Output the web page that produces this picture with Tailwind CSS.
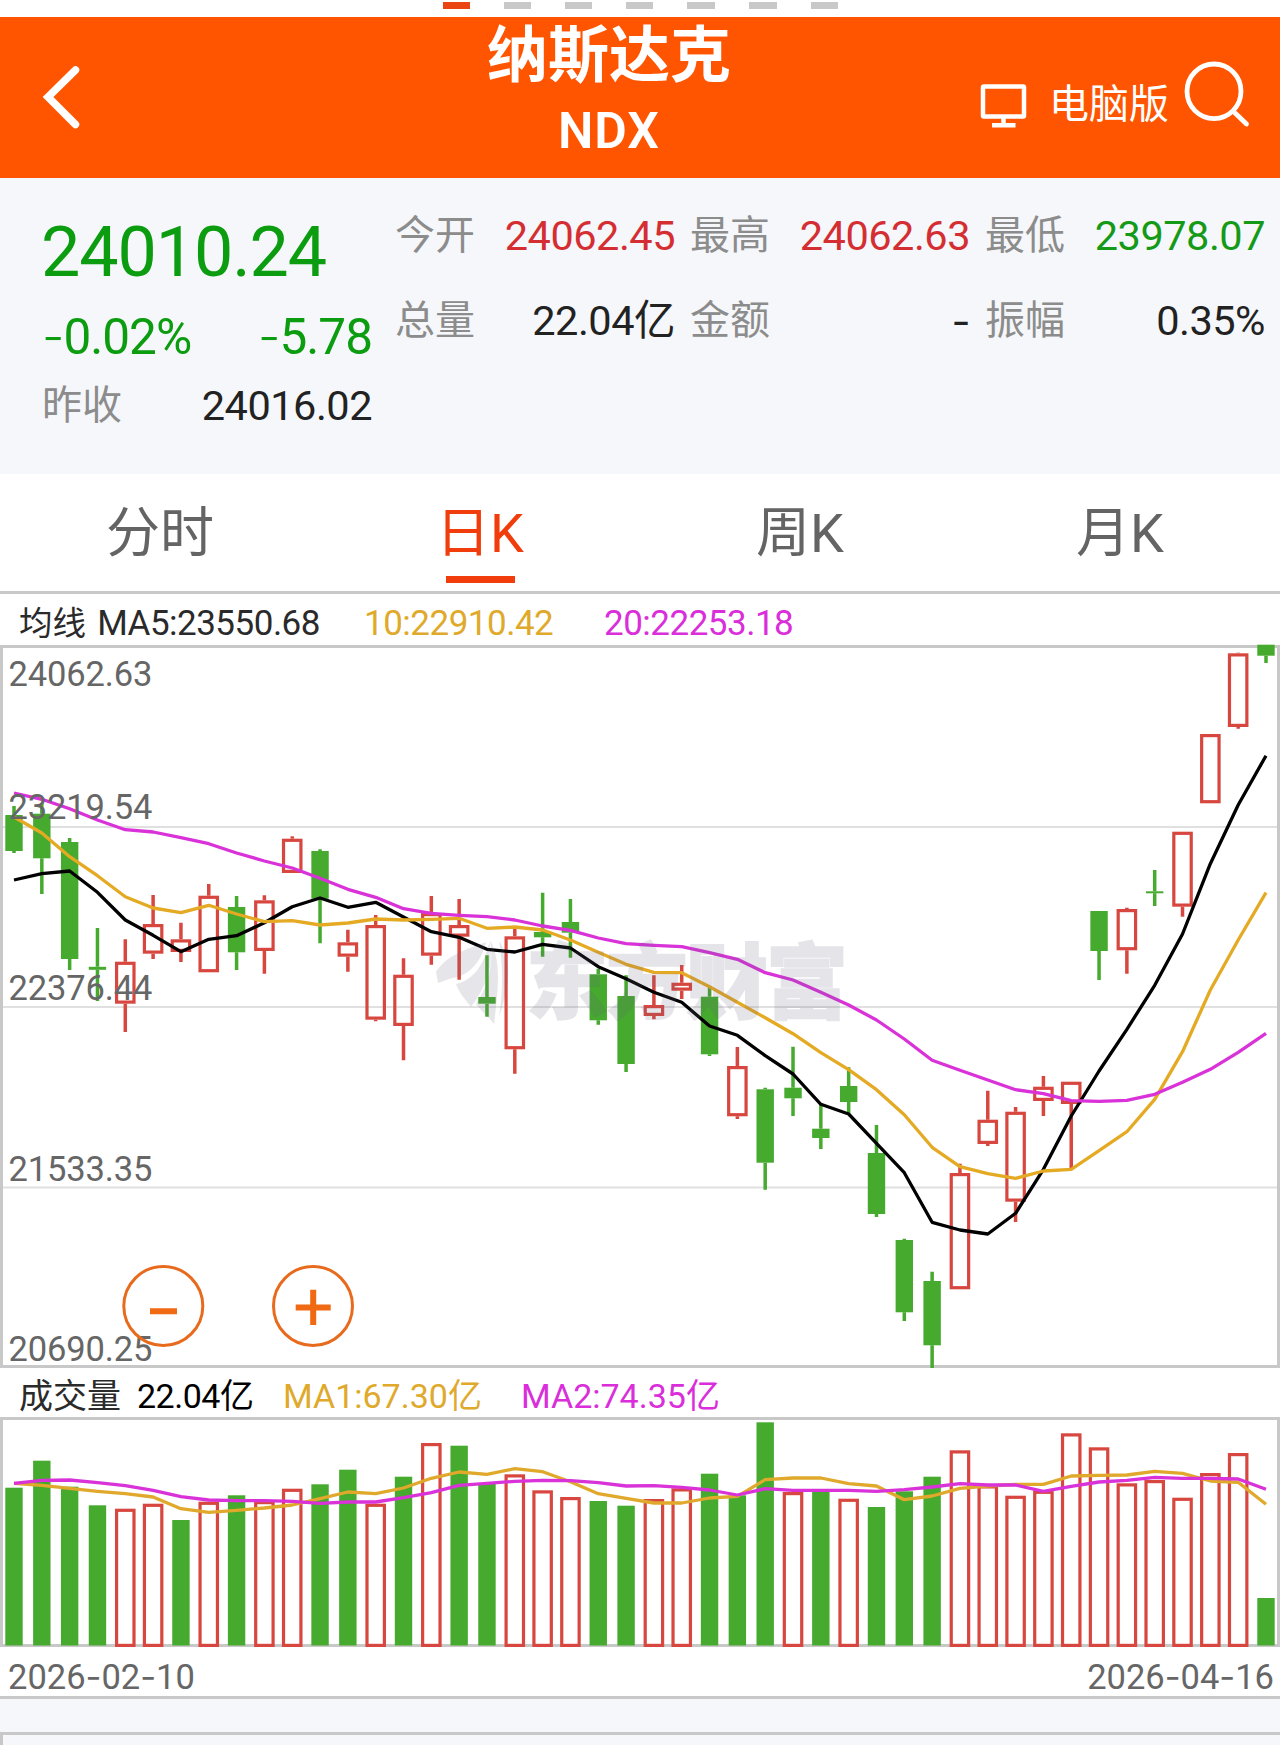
<!DOCTYPE html>
<html lang="zh-CN">
<head>
<meta charset="utf-8">
<title>纳斯达克 NDX</title>
<script src="https://cdn.jsdelivr.net/npm/@tailwindcss/browser@4"></script>
</head>
<body class="w-[1280px] bg-white font-['Roboto','Noto_Sans_CJK_SC',sans-serif] text-[#222]">

<!-- carousel indicator -->
<div class="flex h-[17px] justify-center gap-[34px] pt-[2px]">
  <i class="h-[7px] w-[27px] bg-[#ea4412]"></i><i class="h-[7px] w-[27px] bg-[#c8c8c8]"></i><i class="h-[7px] w-[27px] bg-[#c8c8c8]"></i><i class="h-[7px] w-[27px] bg-[#c8c8c8]"></i><i class="h-[7px] w-[28px] bg-[#c8c8c8]"></i><i class="h-[7px] w-[28px] bg-[#c8c8c8]"></i><i class="h-[7px] w-[27px] bg-[#c8c8c8]"></i>
</div>

<header class="flex h-[161px] bg-[#ff5500] text-white">
  <div class="w-[400px] pl-[40px] pt-[45px]">
    <svg width="44" height="70" viewBox="40 62 44 70" fill="none" stroke="#fff" stroke-width="7.5" stroke-linecap="round"><path d="M75.5 70 48 97l27.500 27.500"/></svg>
  </div>
  <div class="flex w-[418px] flex-col items-center">
    <h1 class="h-[76px] text-[61px] leading-[79px] font-bold">纳斯达克</h1>
    <div class="text-[50px] leading-[76px] font-semibold tracking-[1px]">NDX</div>
  </div>
  <div class="flex flex-1 pl-[161px]">
    <svg class="mt-[65px] shrink-0" width="50" height="48" viewBox="980 82 50 48" fill="none" stroke="#fff" stroke-width="4.500"><rect x="984" y="86.500" width="41" height="30" rx="1"/><path d="M1004.500 117v7M993 125.300h23.500"/></svg>
    <span class="ml-[20px] mt-[58px] text-[40px] leading-[60px] whitespace-nowrap">电脑版</span>
    <svg class="ml-[13px] mt-[40px] shrink-0" width="70" height="74" viewBox="1184 57 70 74" fill="none" stroke="#fff" stroke-width="4.800" stroke-linecap="round"><ellipse cx="1216" cy="91.300" rx="27" ry="27.300"/><path d="M1235.500 111.500 1248.500 124"/></svg>
  </div>
</header>

<section class="flex h-[296px] bg-[#f5f7fa] pl-[42px] text-[41.500px] tracking-[-0.5px]">
  <div class="w-[330px]">
    <div class="mt-[34px] h-[80px] text-[70px] leading-[80px] text-[#0c9c10] tracking-[-1.1px] -ml-px">24010.24</div>
    <div class="mt-[16px] flex h-[56px] justify-between text-[49.500px] leading-[56px] tracking-[-1px] text-[#0c9c10]"><span><span class="font-['Inter'] font-light">-</span>0.02%</span><span><span class="font-['Inter'] font-light">-</span>5.78</span></div>
    <div class="mt-[17px] flex h-[50px] items-center justify-between leading-[50px]"><span class="text-[40px] tracking-normal text-[#8c8c8c]">昨收</span><span>24016.02</span></div>
  </div>
  <div class="ml-[23px] mt-[33px] grid h-[170px] w-[870px] grid-cols-3 grid-rows-[85px_85px] gap-x-[15px] leading-[50px]">
    <div class="flex justify-between"><span class="text-[40px] tracking-normal text-[#8c8c8c]">今开</span><span class="text-[#d42e33]">24062.45</span></div>
    <div class="flex justify-between"><span class="text-[40px] tracking-normal text-[#8c8c8c]">最高</span><span class="text-[#d42e33]">24062.63</span></div>
    <div class="flex justify-between"><span class="text-[40px] tracking-normal text-[#8c8c8c]">最低</span><span class="text-[#159a18]">23978.07</span></div>
    <div class="flex justify-between"><span class="text-[40px] tracking-normal text-[#8c8c8c]">总量</span><span>22.04亿</span></div>
    <div class="flex justify-between"><span class="text-[40px] tracking-normal text-[#8c8c8c]">金额</span><span class="font-['Inter']">-</span></div>
    <div class="flex justify-between"><span class="text-[40px] tracking-normal text-[#8c8c8c]">振幅</span><span>0.35%</span></div>
  </div>
</section>

<nav class="grid h-[120px] grid-cols-4 border-b-[3px] border-[#c8c8c8] text-center text-[54px] text-[#646464]">
  <span class="leading-[120px]">分时</span>
  <span class="flex flex-col items-center text-[#f13c0b]"><span class="h-[102px] leading-[120px]">日K</span><i class="h-[7px] w-[69px] bg-[#f13c0b]"></i></span>
  <span class="leading-[120px]">周K</span>
  <span class="leading-[120px]">月K</span>
</nav>

<div class="flex h-[51px] items-center pl-[19px] text-[35px] leading-[51px] tracking-[-0.5px] whitespace-nowrap">
  <span class="w-[345px] pt-[8px] text-[#2a2a2a]"><span class="mr-[3px] text-[33.500px] tracking-normal">均线</span> MA5:23550.68</span>
  <span class="w-[240px] pt-[8px] text-[#dfaa2c]">10:22910.42</span>
  <span class="pt-[8px] text-[#d92ed9]">20:22253.18</span>
</div>

<div class="relative h-[723px]">
  <svg id="kline" class="block overflow-visible" width="1280" height="723" viewBox="0 645 1280 723"></svg>
</div>

<div class="flex h-[49px] items-center pl-[19px] text-[34px] leading-[49px] whitespace-nowrap">
  <span class="w-[118px] pt-[7px] text-[#2a2a2a]">成交量</span>
  <span class="w-[146px] pt-[7px] tracking-[-0.5px] text-black">22.04亿</span>
  <span class="w-[238px] pt-[7px] text-[#dfaa2c]">MA1:67.30亿</span>
  <span class="pt-[7px] text-[#d92ed9]">MA2:74.35亿</span>
</div>

<svg id="volume" class="block overflow-visible" width="1280" height="230" viewBox="0 1417 1280 230"></svg>

<div class="flex h-[49px] justify-between pl-[8px] pr-[6px] text-[34.500px] leading-[60px] text-[#666]">
  <span>2026<span class="font-['Inter']">-</span>02<span class="font-['Inter']">-</span>10</span>
  <span>2026<span class="font-['Inter']">-</span>04<span class="font-['Inter']">-</span>16</span>
</div>
<div class="h-[39px] border-y-[3px] border-[#c8c8c8] bg-[#f5f7fa]"></div>
<div class="h-[10px] border-l-[3px] border-[#c8c8c8] bg-[#f5f7fa]"></div>

<script>
const GREEN = '#45aa2d', RED = '#d8473f', GRID = '#c8c8c8';
const X = i => 14 + 27.822 * i;
// kind, high, body top, body bottom, low
const candles = [
['g',806,815,851,853],['g',803,813.7,858.3,894],['g',838,842,959,970],['g',928,966.8,969.8,1001],['r',939.3,961.7,1003.7,1032],
['r',895,924,953.7,959],['r',922.7,939.3,952,962],['r',884,895.7,972.3,972.3],['g',896,907,952.3,970],['r',895.3,900.3,951,973.7],
['r',836.3,838.7,873,873],['g',849.3,851,898.7,943.3],['r',929.7,942.3,956.7,971.7],['r',915,925,1019.7,1021.3],['r',958.3,974.7,1026,1060.3],
['r',896,913,955.7,964.7],['r',899,925,936.7,979.7],['g',955.3,997,1003.7,1016.7],['r',927.7,936.3,1049.3,1073.7],['g',892.7,932,937.3,956.7],
['g',899,922,932.7,957.7],['g',968.7,974.3,1020.3,1024.7],['g',975.3,996,1064,1072],['r',975.3,1005,1016,1019.3],['r',965,982.7,990.7,999],
['g',987.3,996.7,1054.3,1056],['r',1047,1066,1116.3,1119],['g',1087.7,1089.3,1162.7,1189.7],['g',1046.7,1087.7,1098.3,1116],['g',1105,1128.7,1138,1149],
['g',1067.3,1086,1102,1113],['g',1125,1153,1214,1217],['g',1238.7,1240,1312.3,1321],['g',1271.7,1281,1345.3,1368],['r',1163.7,1173,1289.3,1289.3],
['r',1090.7,1119.7,1144,1146],['r',1107,1111.7,1201.7,1222],['r',1076,1086.7,1101,1116],['r',1081.7,1081.7,1104,1169.3],['g',911,911,951,980],
['r',907.7,909,950.3,973.7],['g',870,891.3,893.3,906],['r',831.7,831.7,906.7,916.7],['r',734,734,803.3,803.3],['r',652.7,653.3,727,728.7],['g',644.7,644.7,655.7,663]];
const ma5 = [880,873.7,871,892.3,920,935.3,951.7,939.3,935.7,922.7,906.7,898,907.3,902.3,917,931.7,937.3,949.3,952,944.3,948,966.7,978.7,992.3,1002.3,1026,1035.3,1055.7,1074,1104.3,1114,1143.3,1172.7,1222.3,1230,1234,1213.3,1169.3,1116,1071,1029.3,985.3,934,863.7,805,755.7];
const ma10 = [817,833,856.7,875.7,896.7,908,912.7,905.3,914,921.7,920.7,925,923,919,920,919.3,918.3,928.3,927,930,940,952.3,964.3,972.3,972.7,986.7,1002.3,1017.7,1033.7,1052.7,1069.7,1089.7,1114.7,1147.3,1166.7,1173.7,1178.3,1171,1169.3,1150.7,1131.7,1099.3,1051.7,990,940,892.7];
const ma20 = [793,799.3,808.7,820,829.7,832,837.7,843.7,853,861,868,878.3,889.3,897.3,908.7,913.3,915.3,916.7,920,926,930.3,938,943.7,945.3,946.7,952.7,959.3,972.7,980,992.3,1005,1020,1039,1060.3,1070.3,1080,1089.7,1093.7,1100.7,1101.3,1100.3,1094.3,1082.3,1069.3,1052.3,1033.3];
const vol = [1487.7,1460.7,1486.7,1505.3,1508.7,1503.7,1520,1501.7,1495.3,1501,1488.7,1484.3,1469.7,1503.7,1476.7,1443,1445.7,1483.3,1474.3,1490.3,1497,1501,1505.7,1499,1488.3,1473.7,1495.3,1422.3,1492,1491.3,1498.7,1507,1491.3,1476.7,1450.3,1485.3,1495.7,1490.7,1433.3,1447.3,1483.3,1480,1497.7,1473,1453,1598];
const volKind = 'ggggrrgrgrrggrgrggrrrggrrgggrgrgggrrrrrrrrrrrg';
const vma1 = [1483.3,1485.3,1488.3,1491.3,1493.7,1497,1508.7,1512.3,1510.3,1508,1505,1498.7,1492,1493.7,1488,1478.3,1472,1474.3,1468.7,1471.7,1481.7,1493.7,1498.3,1503,1503,1498,1496.3,1479.7,1478,1478,1483.7,1486,1499.7,1496,1488.3,1486,1484.3,1484.3,1476,1475.3,1475,1471.3,1473.3,1481,1482.3,1504.3];
const vma2 = [1483.3,1480.3,1480,1482.7,1485.7,1490.3,1496.7,1500,1500.7,1500.7,1501.3,1503.3,1502,1502,1497.7,1492.7,1485.3,1483.3,1481.3,1480.3,1480.7,1482.7,1486,1485.7,1487.3,1490,1495,1488.7,1490.3,1490.3,1490.3,1491.3,1489.7,1487,1483.7,1485,1485,1491.3,1486.3,1482,1480.3,1477.3,1478.3,1478.3,1479,1489.3];

const line = (ys, c) => `<polyline fill="none" stroke="${c}" stroke-width="3.3" stroke-linejoin="round" points="${ys.map((y, i) => X(i) + ',' + y).join(' ')}"/>`;
const frame = (y, b) => `<rect x="1.500" y="${y + 1.5}" width="1277" height="${b - y - 3}" fill="none" stroke="${GRID}" stroke-width="3"/>`;
const bar = (kind, i, t, b) => kind === 'g'
  ? `<rect x="${X(i) - 8.7}" y="${t}" width="17.400" height="${b - t}" fill="${GREEN}"/>`
  : `<rect x="${X(i) - 8.7}" y="${t + 1.6}" width="17.400" height="${b - t - 3.2}" fill="none" stroke="${RED}" stroke-width="3.2"/>`;

let k = frame(645, 1368);
for (const y of [827, 1007, 1187.500]) k += `<path d="M3 ${y}H1277" stroke="#e0e0e0" stroke-width="2"/>`;
candles.forEach(([kind, h, t, b, l], i) => {
  k += `<path d="M${X(i)} ${h}V${t}M${X(i)} ${b}V${l}" stroke="${kind === 'g' ? GREEN : RED}" stroke-width="3.5"/>` + bar(kind, i, t, b);
});
k += line(ma5, '#000') + line(ma10, '#e5aa24') + line(ma20, '#d932d9');
// brand watermark
k += `<g fill="#6b6480" opacity=".17"><text x="526" y="1012" font-size="82" font-weight="900" stroke="#6b6480" stroke-width="1.500" textLength="322" font-family="Noto Sans CJK SC">东方财富</text>
<path d="M436 972c10-16 28-22 50-30-4 18-16 34-34 36l-14 5zM456 984c18-4 28-20 33-41 6 22-4 46-18 64-6-8-12-14-15-23zM490 940c12 22 8 50 4 84-6-8-14-14-18-20 12-18 18-40 14-64zM499 941c10 14 14 36 0 76 4-26 4-52 0-76z"/></g>`;
k += '<g fill="#666" font-size="34.500">' + [['24062.63',686.2],['23219.54',818.5],['22376.44',999.5],['21533.35',1180.5],['20690.25',1360.7]]
  .map(([s, y]) => `<text x="8.500" y="${y}" textLength="144">${s}</text>`).join('') + '</g>';
// zoom controls
k += `<g fill="none" stroke="#e86a1c" stroke-width="3"><circle cx="163.300" cy="1306" r="39.500"/><circle cx="313" cy="1306" r="39.500"/></g>
<path d="M150 1311.300h27M295.700 1307.500h35M313.200 1289.700v35.300" stroke="#f06a14" stroke-width="6" fill="none"/>`;
document.getElementById('kline').innerHTML = k;

let v = frame(1417, 1647);
vol.forEach((t, i) => { v += bar(volKind[i], i, t, volKind[i] === 'g' ? 1645.5 : 1647); });
v += line(vma1, '#e0a92c') + line(vma2, '#d932d9');
document.getElementById('volume').innerHTML = v;
</script>
</body>
</html>
